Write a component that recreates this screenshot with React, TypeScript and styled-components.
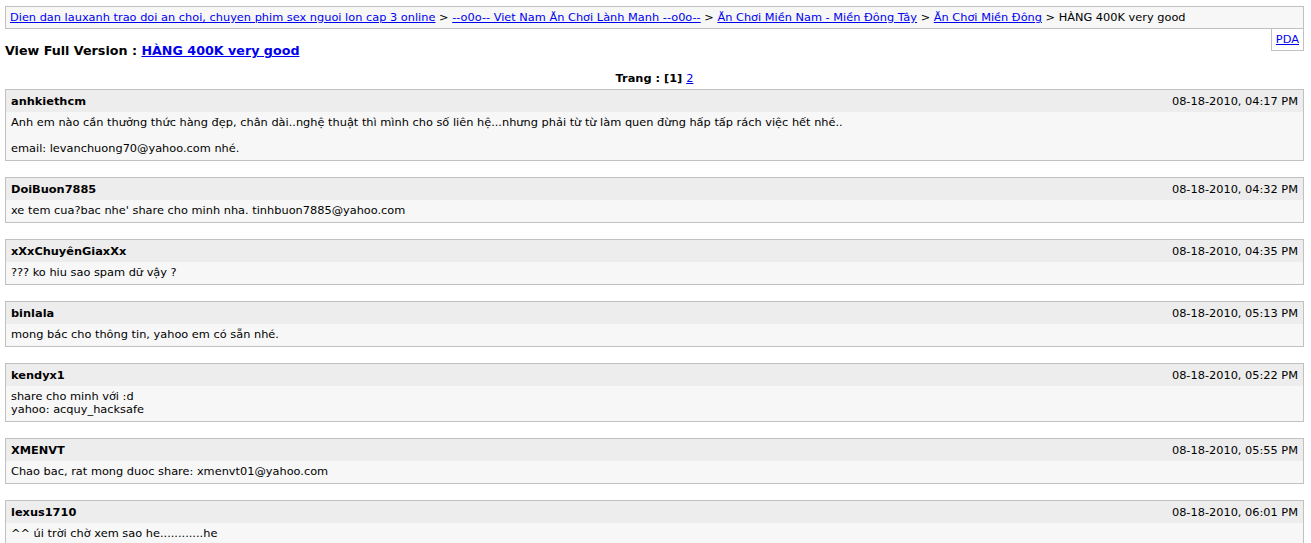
import React from 'react'
import styled, { createGlobalStyle } from 'styled-components'

interface Post {
  user: string
  date: string
  lines: string[]
}

const posts: Post[] = [
  {
    user: 'anhkiethcm',
    date: '08-18-2010, 04:17 PM',
    lines: [
      'Anh em nào cần thưởng thức hàng đẹp, chân dài..nghệ thuật thì mình cho số liên hệ...nhưng phải từ từ làm quen đừng hấp tấp rách việc hết nhé..',
      '',
      'email: levanchuong70@yahoo.com nhé.'
    ]
  },
  {
    user: 'DoiBuon7885',
    date: '08-18-2010, 04:32 PM',
    lines: ["xe tem cua?bac nhe' share cho minh nha. tinhbuon7885@yahoo.com"]
  },
  {
    user: 'xXxChuyênGiaxXx',
    date: '08-18-2010, 04:35 PM',
    lines: ['??? ko hiu sao spam dữ vậy ?']
  },
  {
    user: 'binlala',
    date: '08-18-2010, 05:13 PM',
    lines: ['mong bác cho thông tin, yahoo em có sẵn nhé.']
  },
  {
    user: 'kendyx1',
    date: '08-18-2010, 05:22 PM',
    lines: ['share cho minh với :d', 'yahoo: acquy_hacksafe']
  },
  {
    user: 'XMENVT',
    date: '08-18-2010, 05:55 PM',
    lines: ['Chao bac, rat mong duoc share: xmenvt01@yahoo.com']
  },
  {
    user: 'lexus1710',
    date: '08-18-2010, 06:01 PM',
    lines: ['^^ úi trời chờ xem sao he............he']
  }
]

const crumbs = [
  'Dien dan lauxanh trao doi an choi, chuyen phim sex nguoi lon cap 3 online',
  '--o0o-- Viet Nam Ăn Chơi Lành Manh --o0o--',
  'Ăn Chơi Miền Nam - Miền Đông Tây',
  'Ăn Chơi Miền Đông'
]

const GlobalStyle = createGlobalStyle`
  body {
    margin: 0;
    padding: 6px 7px 6px 5px;
    background: #ffffff;
    color: #000000;
    font: 11.35px "DejaVu Sans", Verdana, sans-serif;
  }
  a {
    color: #0000ee;
  }
`

export default function App() {
  return (
    <>
      <GlobalStyle />
      <NavBar>
        {crumbs.map(c => (
          <React.Fragment key={c}>
            <a href="#">{c}</a> &gt;{' '}
          </React.Fragment>
        ))}
        HÀNG 400K very good
      </NavBar>
      <PdaLink>
        <a href="#">PDA</a>
      </PdaLink>
      <PageTitle>
        View Full Version : <a href="#">HÀNG 400K very good</a>
      </PageTitle>
      <PageNumbers>
        Trang : [1] <a href="#">2</a>
      </PageNumbers>
      {posts.map(p => (
        <PostBox key={p.user}>
          <PostTop>
            <Username>{p.user}</Username>
            <span>{p.date}</span>
          </PostTop>
          <PostText>
            {p.lines.map((l, i) => (
              <React.Fragment key={i}>
                {i > 0 && <br />}
                {l}
              </React.Fragment>
            ))}
          </PostText>
        </PostBox>
      ))}
    </>
  )
}

const NavBar = styled.div`
  background: #f7f7f7;
  border: 1px solid #c1c1c1;
  padding: 4px;
  line-height: 13px;
`

const PdaLink = styled.div`
  float: right;
  border: 1px solid #c1c1c1;
  border-top: none;
  padding: 4px;
  line-height: 13px;
`

const PageTitle = styled.div`
  font-size: 12.7px;
  font-weight: bold;
  padding: 14px 0 0;
  line-height: 16px;
`

const PageNumbers = styled.div`
  text-align: center;
  font-weight: bold;
  margin: 13px 0 4px;
  line-height: 13px;

  a {
    font-weight: normal;
  }
`

const PostBox = styled.div`
  border: 1px solid #c1c1c1;
  background: #f7f7f7;
  margin-bottom: 16px;
  line-height: 13px;
`

const PostTop = styled.div`
  display: flex;
  justify-content: space-between;
  background: #ededed;
  padding: 4px 5px;
  line-height: 14px;
`

const Username = styled.span`
  font-weight: bold;
`

const PostText = styled.div`
  padding: 4px 5px 5px;
`
